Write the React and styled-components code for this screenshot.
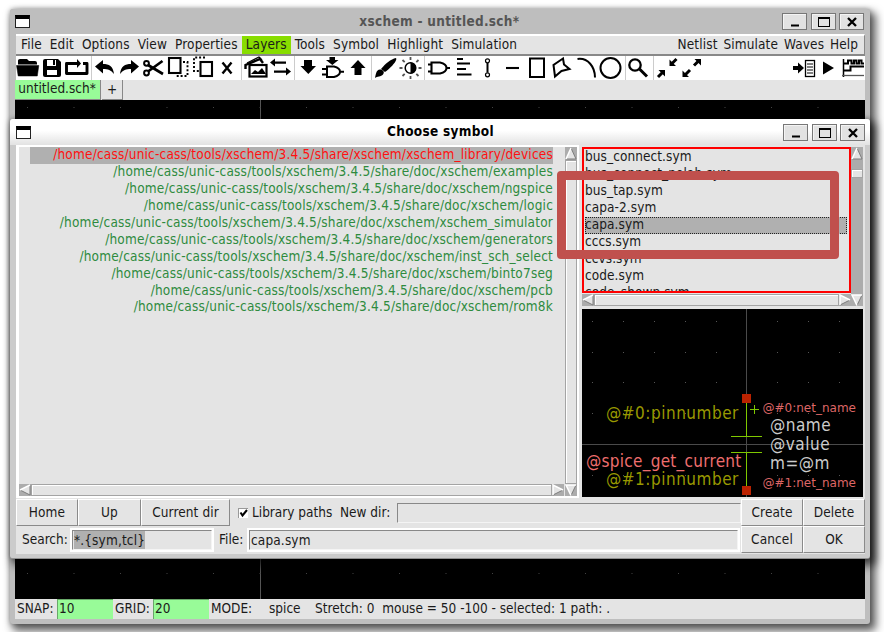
import React from "react";
import styled, { createGlobalStyle, css } from "styled-components";

const Global = createGlobalStyle`
  *{box-sizing:border-box}
  html,body{margin:0;padding:0;width:884px;height:632px;overflow:hidden;background:#fff}
  body{font:13.5px/17px "DejaVu Sans Condensed","DejaVu Sans",sans-serif;font-stretch:condensed;color:#1a1a1a}
`;

const Desktop = styled.div`
  position: relative;
  width: 884px;
  height: 632px;
  overflow: hidden;
  background: #fff;
`;

const Frame = styled.section`
  position: absolute;
  left: 10px;
  top: ${(p) => p.$top}px;
  width: 860px;
  height: ${(p) => p.$height}px;
  display: flex;
  flex-direction: column;
  padding: 0 5px 5px 5px;
  border-radius: 3px;
  background: ${(p) => (p.$active ? "#cbcbcb" : "#bebebe")};
  box-shadow: 4px 5px 9px 2px rgba(0, 0, 0, 0.62), 0 0 5px rgba(0, 0, 0, 0.3);
  ${(p) => p.$active && css`
    padding: 0 5px 4px 6px;
    border-bottom: 1px solid #909090;
  `}
`;

const TitleBar = styled.header`
  display: flex;
  align-items: center;
  flex: none;
  height: ${(p) => (p.$active ? 26 : 25)}px;
  margin: ${(p) => (p.$active ? "0 -5px 0 -6px" : "0 -5px")};
  padding: 0 ${(p) => (p.$active ? 5 : 6)}px 0 ${(p) => (p.$active ? 6 : 5)}px;
  border-radius: 3px 3px 0 0;
  background: ${(p) => (p.$active ? "linear-gradient(#fff 45%, #e2e2e2)" : "#bebebe")};
`;

const SysMenu = styled.span`
  width: 15px;
  height: 13px;
  background: #fff;
  border: 1px solid #222;
  border-top: 4px solid #000;
`;

const Title = styled.h1`
  flex: 1;
  margin: 0;
  padding: 0 0 1px ${(p) => p.$shift}px;
  text-align: center;
  font-size: 13.5px;
  font-weight: 700;
  letter-spacing: 0.3px;
  color: ${(p) => p.$color};
`;

const WinButton = styled.span`
  width: 25px;
  height: 17px;
  margin-left: 3.4px;
  border: 1px solid #777;
  background: #e2e2e2;
  box-shadow: inset 1px 1px #f4f4f4;
  svg { display: block; }
`;

const WinButtons = () => (
  <>
    <WinButton><svg width="23" height="15"><path d="M8 11.5h8" stroke="#000" strokeWidth="2" /></svg></WinButton>
    <WinButton><svg width="23" height="15"><rect x="6.5" y="3.5" width="11" height="9" fill="none" stroke="#000" /><path d="M6 4h12" stroke="#000" strokeWidth="2" /></svg></WinButton>
    <WinButton><svg width="23" height="15"><path d="M8 4l8 8M16 4l-8 8" stroke="#000" strokeWidth="2.3" /></svg></WinButton>
  </>
);

const Menus = styled.nav`
  display: flex;
  flex: none;
  height: 22px;
  margin-left: 1px;
  padding: 0 3px 0 1px;
  background: #e4e4e4;
  border-top: 2px solid #fff;
  border-bottom: 2px solid #888;
  border-right: 1px solid #888;
`;

const MenuItem = styled.span`
  padding: 0 ${(p) => p.$pad || 4.03}px;
  height: 18px;
  line-height: 17px;
  letter-spacing: 0.13px;
  background: ${(p) => (p.$hot ? "#88dd00" : "transparent")};
`;

const Spacer = styled.span`
  flex: 1;
`;

const Tools = styled.div`
  display: flex;
  flex: none;
  height: 24px;
  margin-left: 1px;
  background: #fff;
`;

const ToolIcon = styled.svg`
  flex: none;
  display: block;
  height: 24px;
  overflow: hidden;
`;

const Divider = styled.i`
  flex: none;
  width: 1px;
  background: #ccc;
`;

const Tabs = styled.div`
  display: flex;
  flex: none;
  height: 20px;
  background: #e4e4e4;
`;

const Tab = styled.span`
  width: ${(p) => p.$w}px;
  height: 20px;
  padding-top: ${(p) => (p.$active ? 0 : 1)}px;
  padding-right: ${(p) => (p.$active ? 1 : 0)}px;
  text-align: center;
  line-height: 17px;
  background: ${(p) => (p.$active ? "#98fb98" : "#e4e4e4")};
  border-right: 1px solid #888;
  border-bottom: 1px solid #888;
  margin-right: 1px;
`;

const Schematic = styled.svg`
  display: block;
  flex: none;
  background: #000;
`;

const StatusBar = styled.footer`
  display: flex;
  flex: none;
  height: 20px;
  line-height: 18px;
  background: #e4e4e4;
  white-space: pre;
`;

const StatusText = styled.span`
  flex: none;
  width: ${(p) => (p.$w ? p.$w + "px" : "auto")};
  padding-left: 2px;
`;

const StatusField = styled.span`
  width: 56px;
  height: 20px;
  padding-left: 1px;
  line-height: 17px;
  background: #98fb98;
  border-left: 1px solid #69a969;
  border-top: 1px solid #69a969;
`;

const Body = styled.div`
  display: flex;
  flex-direction: column;
  flex: 1;
  background: #e4e4e4;
`;

const Panes = styled.div`
  display: flex;
  height: 354px;
`;

const LeftPane = styled.div`
  display: grid;
  grid-template: 337px 12px / 545px 12px;
  column-gap: 1px;
  width: 563px;
  height: 353px;
  border: 2px solid #fff;
  border-left-width: 3px;
`;

const PathList = styled.ul`
  margin: 0;
  padding: 0 11px 0 11px;
  list-style: none;
  text-align: right;
  letter-spacing: 0.19px;
  color: #2e8b3e;
`;

const PathRow = styled.li`
  height: 16.95px;
  line-height: 15.6px;
  ${(p) => p.$selected && css`
    color: #ff1010;
    background: #b0b0b0;
  `}
`;

const Bar = styled.div`
  display: flex;
  flex-direction: ${(p) => (p.$vertical ? "column" : "row")};
  overflow: hidden;
  background: #acacac;
  svg { display: block; flex: none; }
`;

const Thumb = styled.span`
  flex: ${(p) => (p.$size ? "none" : 1)};
  ${(p) => (p.$size ? css`height: ${p.$size}px; margin-top: 9px;` : "")}
  background: #e4e4e4;
  border: 1px solid #fff;
  border-right-color: #888;
  border-bottom-color: #888;
  outline: 1px solid #a4a4a4;
  outline-offset: -1px;
  box-shadow: inset 1px 1px #fff;
`;

const arrows = {
  up: ["M6 1L1 12H11Z", "M6 1L1 12", "M1 12H11L6 1"],
  down: ["M1 1H11L6 11.5Z", "M6 11.5L1 1H11", "M11 1L6 11.5"],
  left: ["M1 6L11 1V11Z", "M1 6L11 1", "M11 1V11L1 6"],
  right: ["M11 6L1 1V11Z", "M1 11V1L11 6", "M11 6L1 11"],
};

const Arrow = ({ dir }) => (
  <svg width="12" height={dir === "up" ? 13 : 12}>
    <path d={arrows[dir][0]} fill="#e4e4e4" />
    <path d={arrows[dir][2]} fill="none" stroke="#7d7d7d" />
    <path d={arrows[dir][1]} fill="none" stroke="#fff" strokeWidth="1.5" />
  </svg>
);

const RightPane = styled.div`
  display: flex;
  flex-direction: column;
  width: 286px;
  padding: 2px 2px 0 3px;
`;

const FileGrid = styled.div`
  display: grid;
  grid-template: 147px 12px / 269px 12px;
`;

const FileList = styled.ul`
  height: 146px;
  margin: 0;
  padding: 0 2px 0 1px;
  list-style: none;
  overflow: hidden;
  border: 2px solid #f00;
`;

const FileRow = styled.li`
  height: 16.95px;
  line-height: 15.5px;
  letter-spacing: 0.08px;
  ${(p) => p.$selected && css`
    background: #b0b0b0;
    outline: 1px dotted #222;
    outline-offset: -1px;
  `}
`;

const Preview = styled.svg`
  display: block;
  margin-top: 3px;
  background: #000;
`;

const Controls = styled.div`
  display: grid;
  grid-template-columns: 725px 62px 62px;
  grid-template-rows: 27px 28px;
`;

const ControlRow = styled.div`
  display: flex;
  align-items: center;
  white-space: pre;
`;

const Button = styled.button`
  flex: none;
  width: ${(p) => (p.$w ? p.$w + "px" : "auto")};
  height: 27px;
  padding: 0 0 1px;
  font: inherit;
  letter-spacing: 0.1px;
  color: inherit;
  background: #e4e4e4;
  border: 1px solid #fff;
  border-right: 1px solid #8a8a8a;
  border-bottom: 1px solid #8a8a8a;
`;

const Check = styled.span`
  flex: none;
  width: 10px;
  height: 10px;
  margin: 0 4px 0 8px;
  background: #fff;
  border-top: 1px solid #999;
  border-left: 1px solid #999;
  svg { display: block; }
`;

const Label = styled.span`
  flex: none;
  width: ${(p) => p.$w}px;
  padding-left: ${(p) => p.$pl || 0}px;
  padding-bottom: 1px;
`;

const Entry = styled.span`
  flex: ${(p) => (p.$w ? "none" : 1)};
  width: ${(p) => (p.$w ? p.$w + "px" : "auto")};
  height: 20px;
  line-height: 18px;
  letter-spacing: 0.15px;
  background: #e4e4e4;
  border: 1px solid #f4f4f4;
  border-top-color: #888;
  border-left-color: #888;
  ${(p) => p.$ring && css`box-shadow: 0 0 0 2px #fff; margin: 0 3px 1px 2px; padding-left: 1px;`}
`;

const Highlighted = styled.mark`
  display: inline-block;
  height: 18px;
  color: inherit;
  background: #b0b0b0;
`;

const Callout = styled.div`
  position: absolute;
  left: 557px;
  top: 171px;
  width: 282px;
  height: 88px;
  border: 9px solid #c0504d;
  border-radius: 4px;
`;

const menus = ["File", "Edit", "Options", "View", "Properties", "Layers", "Tools", "Symbol", "Highlight", "Simulation"];

const line = (w) => ({ fill: "none", stroke: "#000", strokeWidth: w || 2 });

/* Each entry: [left edge, width, drawing]; null marks a divider. */
const leftTools = [
  [16, 25, <g><path d="M18 8.5V4.5q0-1.500 2-1.500h7l2 2h6q2 0 2 2v1.500Z" /><path d="M16.500 9.500H38.800L37.300 20H18.200Z" stroke="#000" strokeWidth=".5" /></g>],
  [41, 22, <g><path d="M43 5q0-2 2-2h13l3 3v13q0 2-2 2H45q-2 0-2-2Z" /><path d="M47 4h9v6h-9zM47 14h10v5H47z" fill="#fff" /><path d="M53 4h2v5h-2z" /></g>],
  [63, 28, <g><path d="M79 7.5H66.5V17.5H87V7.5H83" {...line(2.9)} strokeLinejoin="round" /><path d="M77 3L81 7.5L77 12Z" /></g>],
  null,
  [92, 25, <path d="M95 10.5L103 4V8C109 8 113 10 114 18C111 14 108 13 103 13V17.5Z" />],
  [117, 24, <path d="M139 10.5L131 4V8C125 8 121 10 120 18C123 14 126 13 131 13V17.5Z" />],
  [141, 25, <g><circle cx="146.5" cy="7.3" r="2.4" {...line(2)} /><circle cx="146.5" cy="17" r="2.4" {...line(2)} /><path d="M148 9L163 18M148 15.5L162.5 5" {...line(2.7)} /></g>],
  [166, 25, <g><rect x="169" y="2" width="11.5" height="15" {...line(2.1)} /><path d="M183 6H187.5V20H175" {...line(1.9)} strokeDasharray="2 1.9" /></g>],
  [191, 25, <g><rect x="200.5" y="6" width="11.5" height="14" {...line(2.1)} /><path d="M205 1.5H194V15H199" {...line(1.9)} strokeDasharray="2 1.9" /></g>],
  [216, 25, <path d="M222.5 6.5L231.5 17.5M231.5 6.5L222.5 17.5" {...line(2.4)} />],
  null,
  [242, 27, <g><path d="M245.5 13V9L260 3L263 7" {...line(2.4)} /><path d="M247 7L259 1L262 4" {...line(1.2)} /><rect x="249.5" y="9" width="17" height="11.5" {...line(2.2)} /><path d="M251 18l4-4 3 2 4-4 4 6Z" /></g>],
  [269, 25, <g><path d="M274 6.6H286M274 15.6H288" {...line(2.3)} /><path d="M275 2.5V10.5L270 6.6ZM286 11.5V19.5L291 15.6Z" /></g>],
  null,
  [295, 25, <path d="M304 4H312V10H316L308.3 18L300.5 10H304Z" />],
  [320, 27, <g><path d="M329.5 1H335V4H338.5L332.3 9L326 4H329.5Z" /><path d="M327 10.5H334Q340 12 340 15.7Q340 19.5 334 21H327ZM322 13H327M322 18.5H327M340 15.7H344" {...line(2)} /></g>],
  [347, 24, <path d="M354.5 19V12H350.5L358 4L365.5 12H361.5V19Z" />],
  null,
  [372, 26, <g><path d="M396 2C398 5 388 14 385 16L381 13C385 8 391 3 396 2Z" /><path d="M380 13.5C383 13.5 385 16 383 18.5C381 21 377 20 375 22C376 18 376 14 380 13.5Z" /></g>],
  [398, 26, <g><circle cx="410.5" cy="12" r="5.3" {...line(1.5)} /><path d="M410.5 6.5A5.5 5.5 0 0 1 410.5 17.5Z" /><path d="M410.5 1V4M410.5 20V23M399.5 12H402.5M418.5 12H421.5M402.5 4L404.7 6.2M418.5 4L416.3 6.2M402.5 20L404.7 17.8M418.5 20L416.3 17.8" {...line(1.8)} stroke="#555" /></g>],
  null,
  [425, 28, <path d="M431.5 6.5H440Q446.5 8 446.5 12Q446.5 16 440 17.5H431.5ZM428 8.5H432M428 15.5H432M446 12H450" {...line(2.1)} />],
  [453, 24, <path d="M457 3H463M457 7.5H470M457 13H466M457 18.5H471.5" {...line(2.2)} />],
  [477, 22, <g><circle cx="487.5" cy="4.8" r="2" {...line(1.2)} /><circle cx="487.5" cy="18.8" r="2" {...line(1.2)} /><path d="M487.5 7V16.5" {...line(2)} /></g>],
  [499, 26, <path d="M506 12H519" {...line(2.1)} />],
  [525, 24, <rect x="530" y="2.5" width="14" height="18.5" {...line(2)} />],
  [549, 25, <path d="M563 2.5L553.5 9L555 20.5L561.5 15L569.5 13L564 8.5Z" {...line(2)} />],
  [574, 24, <path d="M577.5 3C588 1.5 595 11 595 21.5" {...line(2)} />],
  [598, 27, <circle cx="610.5" cy="12" r="10" {...line(2)} />],
  null,
  [626, 27, <g><circle cx="635" cy="9" r="5.7" {...line(2.3)} /><path d="M639.5 13L647 20.5" {...line(3)} /></g>],
  null,
  [654, 25, <g><path d="M658 21L663 16M676.5 3L671 8.5" {...line(3)} /><path d="M658.5 14H665V20.5ZM669.5 3.5V10H676Z" /></g>],
  [679, 26, <g><path d="M690 14L685 19M694 9.5L699 4.5" {...line(3)} /><path d="M682.5 14.5V21H689ZM694.5 3H701V9.5Z" /></g>],
];

const rightTools = [
  [789, 28, <g><path d="M792 12H799" {...line(4)} /><path d="M797 6.5L803 12L797 17.5Z" /><rect x="804.5" y="4.5" width="9" height="16" {...line(1.3)} /><path d="M806 8H812M806 11H812M806 14H812M806 17H812" {...line(1)} /></g>],
  [817, 21, <path d="M822 5.5L833 12L822 18.5Z" />],
  [838, 26, <g><path d="M842.5 3V21" {...line(1.5)} /><path d="M843 7.5H847V4.5H850.5V7.5H853V4.5H855.5V7.5H858V4.5H860.5V7.5H863M843 14.5H849.5V10.5H863" {...line(2)} /><path d="M841 19.5H863" {...line(1.3)} stroke="#555" /></g>],
];

const ToolRun = ({ items }) =>
  items.map((t, i) =>
    t ? (
      <ToolIcon key={i} width={t[1]} height="24" viewBox={`${t[0]} 0 ${t[1]} 24`}>{t[2]}</ToolIcon>
    ) : (
      <Divider key={i} />
    )
  );

const share = "/home/cass/unic-cass/tools/xschem/3.4.5/share/";
const paths = [
  "xschem/xschem_library/devices",
  "doc/xschem/examples",
  "doc/xschem/ngspice",
  "doc/xschem/logic",
  "doc/xschem/xschem_simulator",
  "doc/xschem/generators",
  "doc/xschem/inst_sch_select",
  "doc/xschem/binto7seg",
  "doc/xschem/pcb",
  "doc/xschem/rom8k",
];

const files = ["bus_connect.sym", "bus_connect_nolab.sym", "bus_tap.sym", "capa-2.sym", "capa.sym", "cccs.sym", "ccvs.sym", "code.sym", "code_shown.sym"];

const mainDots = Array.from({ length: 18 }, (_, i) => 12.5 + i * 46.5);
const gridX = [10.5, 41.5, 72.5, 103.5, 134.5, 195.5, 226.5, 257.5];
const gridY = [12.5, 43.5, 73.5, 104.5, 166.5];

const NetText = styled.text`
  font-family: "DejaVu Sans", sans-serif;
  font-stretch: normal;
  font-size: 12px;
  fill: #dd6666;
`;

const SymbolText = styled.text`
  font-size: 17px;
  letter-spacing: ${(p) => p.$ls}px;
  fill: ${(p) => p.$color};
`;

export default function App() {
  return (
    <Desktop>
      <Global />
      <Frame $top={9} $height={615}>
        <TitleBar>
          <SysMenu />
          <Title $shift={70} $color="#555">xschem - untitled.sch*</Title>
          <WinButtons />
        </TitleBar>
        <Menus>
          {menus.map((m) => (
            <MenuItem key={m} $hot={m === "Layers"}>{m}</MenuItem>
          ))}
          <Spacer />
          {["Netlist", "Simulate", "Waves", "Help"].map((m) => (
            <MenuItem key={m} $pad={2.9}>{m}</MenuItem>
          ))}
        </Menus>
        <Tools>
          <ToolRun items={leftTools} />
          <Spacer />
          <ToolRun items={rightTools} />
        </Tools>
        <Tabs>
          <Tab $w={86} $active>untitled.sch*</Tab>
          <Tab $w={21}>+</Tab>
        </Tabs>
        <Schematic width="850" height="499">
          <path d="M245.5 0V499" stroke="#555" />
          {[7, 473].map((y) => mainDots.map((x) => <rect key={x + "-" + y} x={x - 0.5} y={y} width="1" height="1" fill="#444" />))}
        </Schematic>
        <StatusBar>
          <StatusText $w={42}>SNAP:</StatusText>
          <StatusField>10</StatusField>
          <StatusText $w={40}>GRID:</StatusText>
          <StatusField>20</StatusField>
          <StatusText $w={58}>MODE:</StatusText>
          <StatusText $w={46}>spice</StatusText>
          <StatusText>Stretch: 0  mouse = 50 -100 - selected: 1 path: .</StatusText>
        </StatusBar>
      </Frame>

      <Frame $top={119} $height={440} $active>
        <TitleBar $active>
          <SysMenu />
          <Title $shift={70} $color="#000">Choose symbol</Title>
          <WinButtons />
        </TitleBar>
        <Body>
          <Panes>
            <LeftPane>
              <PathList>
                {paths.map((p, i) => (
                  <PathRow key={p} $selected={i === 0}>{share + p}</PathRow>
                ))}
              </PathList>
              <Bar $vertical><Arrow dir="up" /><Thumb /></Bar>
              <Bar><Arrow dir="left" /><Thumb /><Arrow dir="right" /></Bar>
              <Bar><Arrow dir="down" /></Bar>
            </LeftPane>
            <RightPane>
              <FileGrid>
                <FileList>
                  {files.map((f) => (
                    <FileRow key={f} $selected={f === "capa.sym"}>{f}</FileRow>
                  ))}
                </FileList>
                <Bar $vertical><Arrow dir="up" /><Thumb $size={9} /></Bar>
                <Bar><Arrow dir="left" /><Thumb /><Arrow dir="right" /></Bar>
                <Bar><Arrow dir="down" /></Bar>
              </FileGrid>
              <Preview width="281" height="188">
                {gridY.map((y) => gridX.map((x) => <rect key={x + "-" + y} x={x - 0.5} y={y - 0.5} width="1" height="1" fill="#555" />))}
                <path d="M164.5 0V188M0 135.5H281" stroke="#4a4a4a" />
                <path d="M164.5 90V127.5M149 127.5H180M149 143.5H180M164.5 143.5V182M168 100.5H177M172.5 96V105" stroke="#7fc800" fill="none" />
                <rect x="160" y="85" width="9" height="9" fill="#bb2200" />
                <rect x="160" y="177" width="9" height="9" fill="#bb2200" />
                <SymbolText x="24" y="110" $ls={0.5} $color="#999900">@#0:pinnumber</SymbolText>
                <SymbolText x="24" y="176" $ls={0.5} $color="#999900">@#1:pinnumber</SymbolText>
                <SymbolText x="4" y="158" $ls={0.28} $color="#ee6e6e">@spice_get_current</SymbolText>
                <NetText x="180.5" y="103">@#0:net_name</NetText>
                <NetText x="180.5" y="178">@#1:net_name</NetText>
                <SymbolText x="188" y="122" $ls={0.5} $color="#cccccc">@name</SymbolText>
                <SymbolText x="188" y="141" $ls={0.5} $color="#cccccc">@value</SymbolText>
                <SymbolText x="188" y="160" $ls={0.5} $color="#cccccc">m=@m</SymbolText>
              </Preview>
            </RightPane>
          </Panes>
          <Controls>
            <ControlRow>
              <Button $w={62}>Home</Button>
              <Button $w={63}>Up</Button>
              <Button $w={89}>Current dir</Button>
              <Check><svg width="9" height="9"><path d="M1.5 3.5L3.5 6.5L8 1" {...line(2)} /></svg></Check>
              <Label $w={88}>Library paths</Label>
              <Label $w={57}>New dir:</Label>
              <Entry />
            </ControlRow>
            <Button>Create</Button>
            <Button>Delete</Button>
            <ControlRow>
              <Label $w={54} $pl={6}>Search:</Label>
              <Entry $ring $w={140}><Highlighted>{"*.{sym,tcl}"}</Highlighted></Entry>
              <Label $w={32} $pl={4}>File:</Label>
              <Entry $ring>capa.sym</Entry>
            </ControlRow>
            <Button>Cancel</Button>
            <Button>OK</Button>
          </Controls>
        </Body>
      </Frame>
      <Callout />
    </Desktop>
  );
}
